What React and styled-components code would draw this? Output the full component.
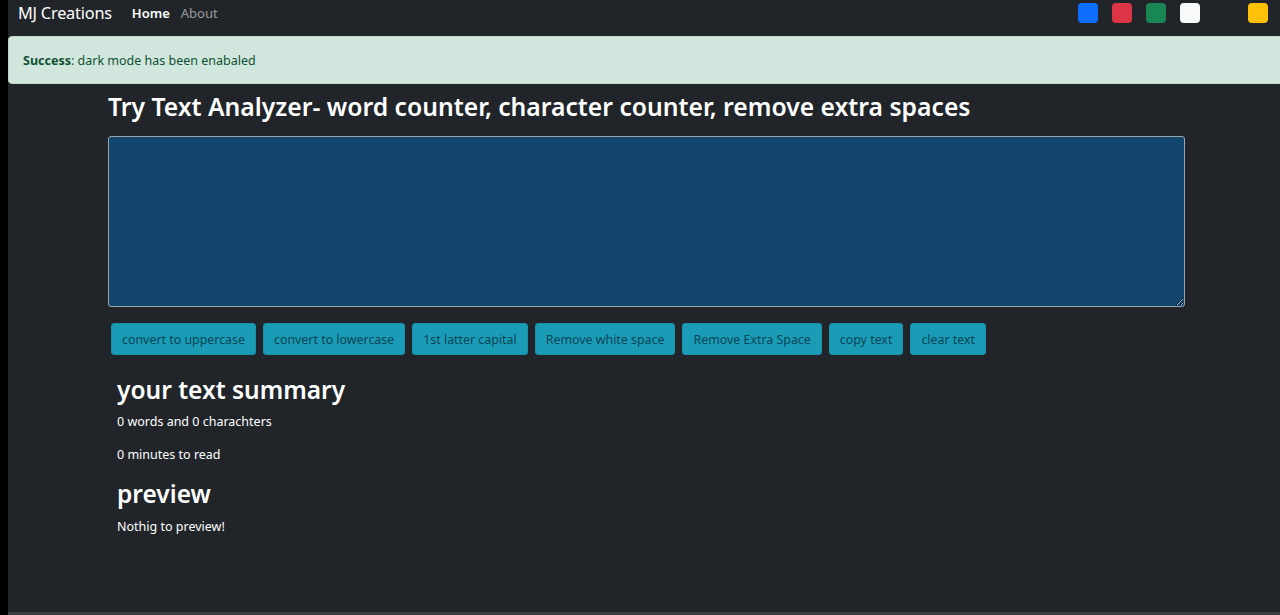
import styled, { createGlobalStyle } from "styled-components";

const Global = createGlobalStyle`
  html, body {
    margin: 0;
    background: #000;
  }
  body {
    font-family: "Noto Sans", "Open Sans", sans-serif;
  }
`;

const Page = styled.div`
  margin-left: 8px;
  min-height: 100vh;
  background: #212529;
  color: #fff;
  border-bottom: 3px solid #3a3f44;
  box-sizing: border-box;
`;

const Nav = styled.nav`
  height: 26px;
  display: flex;
  align-items: center;
  padding: 0 10px;
  margin-bottom: 10px;
`;

const Brand = styled.div`
  font-size: 16.3px;
  color: #fff;
  margin-right: 20px;
  letter-spacing: -0.2px;
`;

const NavLink = styled.a`
  font-size: 13px;
  font-weight: ${(p) => (p.active ? 600 : 400)};
  color: ${(p) => (p.active ? "#fff" : "rgba(255,255,255,0.55)")};
  margin-right: 11px;
  text-decoration: none;
`;

const Swatches = styled.div`
  margin-left: auto;
  display: flex;
  align-items: center;
  gap: 14px;
  padding-right: 2px;
`;

const Swatch = styled.div`
  width: 20px;
  height: 20px;
  border-radius: 4px;
  background: ${(p) => p.color};
  margin-left: ${(p) => (p.far ? "34px" : "0")};
`;

const Alert = styled.div`
  height: 48px;
  display: flex;
  align-items: center;
  padding-left: 14px;
  margin-right: -8px;
  background: #d1e7dd;
  color: #0f5132;
  border: 1px solid #badbcc;
  border-radius: 4px 0 0 4px;
  font-size: 12.5px;
  box-sizing: border-box;
  strong {
    font-weight: 700;
  }
`;

const Container = styled.main`
  width: 1077px;
  margin-left: 100px;
  padding-top: 8px;
`;

const Title = styled.h1`
  margin: 0 0 14px;
  font-size: 24.7px;
  font-weight: 600;
  line-height: 30px;
`;

const TextArea = styled.textarea`
  display: block;
  width: 100%;
  height: 171px;
  box-sizing: border-box;
  background: #13466e;
  color: #fff;
  border: 1px solid #9aa4ad;
  border-radius: 3px;
  resize: vertical;
  outline: none;
`;

const Buttons = styled.div`
  display: flex;
  gap: 7px;
  margin: 16px 0 0 3px;
`;

const Button = styled.button`
  height: 32px;
  padding: 0 10px;
  background: #1a9cb7;
  color: #0a4556;
  border: 1px solid #1692ab;
  border-radius: 3px;
  font-family: inherit;
  font-size: 12.4px;
`;

const Summary = styled.section`
  margin-left: 9px;
  padding-top: 20px;
`;

const Heading = styled.h2`
  margin: ${(p) => p.m || "0"};
  font-size: 24.5px;
  font-weight: 600;
  line-height: 30px;
`;

const Line = styled.p`
  margin: ${(p) => p.m || "8px 0 0"};
  font-size: 12.5px;
  line-height: 18px;
`;

const colors = ["#0d6efd", "#dc3545", "#198754", "#f8f9fa"];
const actions = [
  "convert to uppercase",
  "convert to lowercase",
  "1st latter capital",
  "Remove white space",
  "Remove Extra Space",
  "copy text",
  "clear text",
];

export default function App() {
  return (
    <Page>
      <Global />
      <Nav>
        <Brand>MJ Creations</Brand>
        <NavLink active>Home</NavLink>
        <NavLink>About</NavLink>
        <Swatches>
          {colors.map((c) => (
            <Swatch key={c} color={c} />
          ))}
          <Swatch color="#ffc107" far />
        </Swatches>
      </Nav>
      <Alert>
        <span>
          <strong>Success</strong>: dark mode has been enabaled
        </span>
      </Alert>
      <Container>
        <Title>
          Try Text Analyzer- word counter, character counter, remove extra
          spaces
        </Title>
        <TextArea />
        <Buttons>
          {actions.map((a) => (
            <Button key={a}>{a}</Button>
          ))}
        </Buttons>
        <Summary>
          <Heading>your text summary</Heading>
          <Line>0 words and 0 charachters</Line>
          <Line m="15px 0 0">0 minutes to read</Line>
          <Heading m="15px 0 0">preview</Heading>
          <Line m="9px 0 0">Nothig to preview!</Line>
        </Summary>
      </Container>
    </Page>
  );
}
